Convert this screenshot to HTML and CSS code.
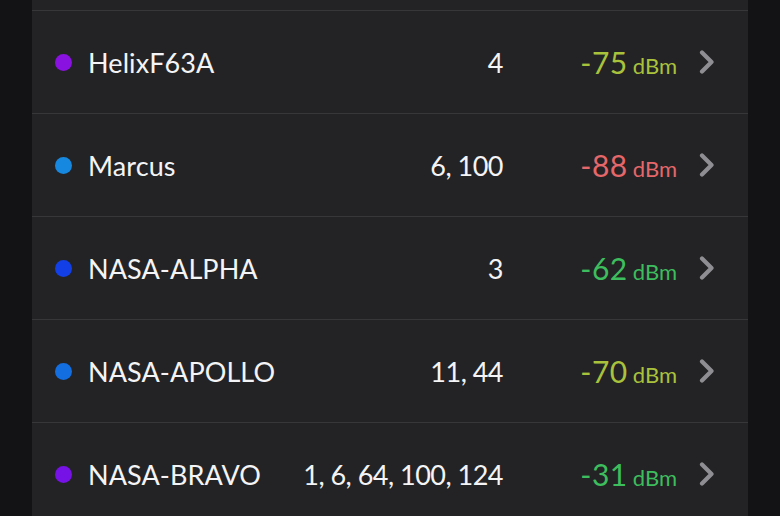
FILE: index.html
```html
<!DOCTYPE html>
<html>
<head>
<meta charset="utf-8">
<link rel="stylesheet" href="styles.css">
</head>
<body>
<div class="list">
  <div class="row row-partial"></div>
  <div class="row">
    <span class="dot dot-violet"></span>
    <span class="name">HelixF63A</span>
    <span class="channels">4</span>
    <span class="signal sig-fair"><span class="val">-75</span><span class="unit">dBm</span></span>
    <svg class="chev" viewBox="0 0 18 24"><path d="M4 2.5 L13.5 12 L4 21.5" /></svg>
  </div>
  <div class="row">
    <span class="dot dot-sky"></span>
    <span class="name">Marcus</span>
    <span class="channels">6, 100</span>
    <span class="signal sig-bad"><span class="val">-88</span><span class="unit">dBm</span></span>
    <svg class="chev" viewBox="0 0 18 24"><path d="M4 2.5 L13.5 12 L4 21.5" /></svg>
  </div>
  <div class="row">
    <span class="dot dot-blue"></span>
    <span class="name">NASA-ALPHA</span>
    <span class="channels">3</span>
    <span class="signal sig-good"><span class="val">-62</span><span class="unit">dBm</span></span>
    <svg class="chev" viewBox="0 0 18 24"><path d="M4 2.5 L13.5 12 L4 21.5" /></svg>
  </div>
  <div class="row">
    <span class="dot dot-azure"></span>
    <span class="name">NASA-APOLLO</span>
    <span class="channels">11, 44</span>
    <span class="signal sig-fair"><span class="val">-70</span><span class="unit">dBm</span></span>
    <svg class="chev" viewBox="0 0 18 24"><path d="M4 2.5 L13.5 12 L4 21.5" /></svg>
  </div>
  <div class="row">
    <span class="dot dot-purple"></span>
    <span class="name">NASA-BRAVO</span>
    <span class="channels">1, 6, 64, 100, 124</span>
    <span class="signal sig-good"><span class="val">-31</span><span class="unit">dBm</span></span>
    <svg class="chev" viewBox="0 0 18 24"><path d="M4 2.5 L13.5 12 L4 21.5" /></svg>
  </div>
</div>
</body>
</html>
```
FILE: styles.css
```css
html, body {
  margin: 0;
  padding: 0;
  background: #131315;
  height: 100%;
  overflow: hidden;
}
body {
  font-family: "Lato", "Noto Sans", sans-serif;
  color: #f4f4f6;
}
.list {
  margin: 0 32px;
  background: #232325;
  min-height: 100%;
}
.row {
  display: flex;
  align-items: center;
  height: 102px;
  border-bottom: 1px solid #37373a;
  padding: 0 32px 0 23px;
}
.row-partial {
  height: 10px;
}
.dot {
  width: 17px;
  height: 17px;
  border-radius: 50%;
  flex: none;
  margin-right: 16px;
}
.dot-violet { background: #8a12e0; }
.dot-sky { background: #1788e0; }
.dot-blue { background: #1240e6; }
.dot-azure { background: #136ee0; }
.dot-purple { background: #7612e6; }
.name {
  flex: 1;
  font-size: 27px;
  letter-spacing: 0.1px;
}
.channels {
  font-size: 27px;
  text-align: right;
  letter-spacing: -0.5px;
  margin-right: 64px;
}
.signal {
  width: 110px;
  text-align: right;
  white-space: nowrap;
}
.val {
  font-size: 30px;
  letter-spacing: 0.5px;
}
.unit {
  font-size: 22px;
  margin-left: 5px;
}
.sig-fair { color: #a9c23c; }
.sig-bad { color: #e6676a; }
.sig-good { color: #3dbd5d; }
.chev {
  width: 18px;
  height: 24px;
  margin-left: 21px;
  flex: none;
}
.chev path {
  fill: none;
  stroke: #8e8e93;
  stroke-width: 4.2;
  stroke-linecap: round;
  stroke-linejoin: round;
}
```
